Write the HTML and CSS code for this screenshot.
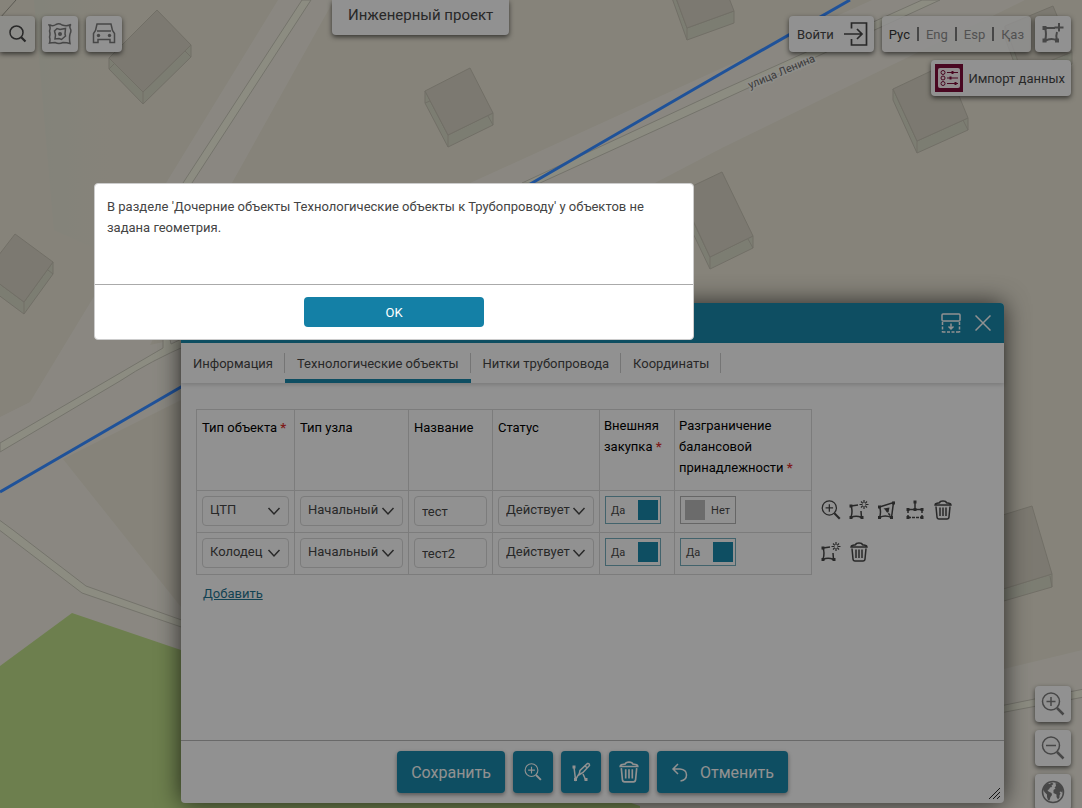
FILE: index.html
```
<!DOCTYPE html>
<html lang="ru">
<head>
  <meta charset="UTF-8" />
  <meta name="viewport" content="width=device-width, initial-scale=1.0" />
  <title>Инженерный проект</title>
  <link rel="stylesheet" href="styles.css">
</head>
<body>
  <!-- icon sprite -->
  <svg class="sprite" aria-hidden="true">
    <symbol id="i-search" viewBox="0 0 18 18"><circle cx="7.5" cy="7.5" r="6.5"/><path d="M12.2 12.2L16.5 16.5" stroke-width="2.2"/></symbol>
    <symbol id="i-layers" viewBox="0 0 24 24"><path d="M2 3Q5 4.500 8 2.500Q11 1 14 3Q19 4.500 23 2.500Q21 4 22.500 7Q23.500 9 22 12Q21 16 22 21.500Q19 20.500 15 20.500Q11 22.500 7 20.500Q4 20.500 1.500 21Q2.500 18 1.500 15Q2.500 12 1.500 9Q3 5 1 3Z"/><path d="M6.500 9L9 6.500L12 7.500L17.500 6.500L17 12L17.500 14L13.500 17.500L11 16.500L7 17L7.500 13Z"/><circle cx="12" cy="12" r="2" class="solid"/></symbol>
    <symbol id="i-car" viewBox="0 0 24 24"><path d="M3.500 8.500L5 2H19L20.500 8.500L22.500 11.500V20.500H18V17.500H6V20.500H1.500V11.500Z"/><path d="M5 9H19"/><circle cx="6.500" cy="13.500" r="1.700" class="solid"/><circle cx="17.500" cy="13.500" r="1.700" class="solid"/></symbol>
    <symbol id="i-login" viewBox="0 0 24 24"><path d="M7.500 6.500V1H22.500V23H7.500V17M0 12H18M13 7L18 12L13 17" stroke-width="1.7"/></symbol>
    <symbol id="i-addpoly" viewBox="0 0 24 24"><path d="M4 6H14M4 6Q6 12 4 19M4 19Q10 15.500 16 18.500M16 18.500Q14.500 14 16 10M18 1V9.500M13.500 5.500H22.500"/><path class="solid" d="M1.500 4h4v4h-4zM1.500 16.500h4v4h-4zM14 16.500h4v4h-4z"/></symbol>
    <symbol id="i-import" viewBox="0 0 28 28"><path class="red" d="M0 0h28v28H0z"/><rect class="pale" x="3" y="4" width="22" height="20" rx="2"/><g class="marks"><circle cx="8" cy="8.500" r="2"/><circle cx="8" cy="14" r="2"/><circle cx="8" cy="19.500" r="2"/><path d="M12 8.500H23M12 14H23M12 19.500H23"/><path d="M17.500 7v3M15.500 12.500v3M20.500 18v3" stroke-width="2"/></g></symbol>
    <symbol id="i-zoomin" viewBox="0 0 24 24"><circle cx="10" cy="9.500" r="8.500"/><path d="M5.500 9.500H14.500M10 5V14"/><path d="M16 16L22.500 22.500" stroke-width="2.500"/></symbol>
    <symbol id="i-zoomout" viewBox="0 0 24 24"><circle cx="10" cy="9.500" r="8.500"/><path d="M5 9.500H15"/><path d="M16 16L22.500 22.500" stroke-width="2.500"/></symbol>
    <symbol id="i-globe" viewBox="0 0 24 24"><circle cx="12" cy="12" r="10.500"/><path class="solid" d="M2 9L4 5L7 3.500L8.500 4L11 2.500L12.500 4L10.500 5.500L11 7L9 7.500L8 9.500L6.500 10L7.500 11.500L10.500 13L11 15L9.500 17L8.500 20.500L7 20L6 17L6 14.500L3.500 12ZM14.500 3L18 3.500L20.500 6L22 9.500L21.500 13L20 11.500L18.500 12L19.500 13.500L18.500 15.500L18.500 17.500L17 19.500L15.500 17L15.500 14.500L12.500 13L12.500 10L14.500 8.500L13.500 7.500L15 6Z"/></symbol>
    <symbol id="i-newpoly" viewBox="0 0 20 20"><path d="M2 6L9 5M2 6Q4 11 2 17.500M2 17.500Q7 15 12.500 17.500M12.500 17.500L12 11"/><path d="M15 0V3M15 6V9M10.500 4.500H13.500M16.500 4.500H19.500M12 1.500L13.800 3.300M16.200 5.700L18 7.500M18 1.500L16.200 3.300M13.800 5.700L12 7.500" stroke-width="1.200"/><path class="solid" d="M.5 4.500h3v3h-3zM.5 16h3v3h-3zM11.500 16h3v3h-3z"/></symbol>
    <symbol id="i-editpoly" viewBox="0 0 20 20"><path d="M2.500 7L16.500 2.500L14.500 17.500Q8 14.500 2.500 17.500Q4.500 12 2.500 7Z"/><path d="M9 10L13.500 16" stroke-dasharray="3 1"/><path class="solid" d="M6.500 8.500l6-1-1 5zM1 5.500h3v3h-3zM15 1.500h3v3h-3zM1 16h3v3h-3zM13 16h3v3h-3z"/></symbol>
    <symbol id="i-nodes" viewBox="0 0 20 20"><path d="M10 2V8M3 9.500H17"/><path d="M3 17.500H17" stroke-dasharray="3 1"/><path d="M3 11V17M17 11V17" stroke-dasharray="2 2"/><path class="solid" d="M8.500 0.500h3v3h-3zM8.500 8h3v3h-3zM1.500 8h3v3h-3zM15.500 8h3v3h-3zM1.500 16h3v3h-3zM15.500 16h3v3h-3z"/></symbol>
    <symbol id="i-trash" viewBox="0 0 20 20"><path d="M2 5Q2 3.500 4 3.200L6.500 2.800Q7 1 10 1Q13 1 13.500 2.800L16 3.200Q18 3.500 18 5ZM3 6.500L4 17Q4.200 19 6 19H14Q15.800 19 16 17L17 6.500M7 7.500V16M10 7.500V16M13 7.500V16"/></symbol>
    <symbol id="i-chevron" viewBox="0 0 14 10"><path d="M1.500 2L7 8L12.500 2"/></symbol>
    <symbol id="i-dock" viewBox="0 0 20 20"><rect x="1" y="1" width="18" height="7" rx="1"/><path d="M1.500 9V19.500M18.500 9V19.500M1.500 19H18.500" stroke-dasharray="3 1.500"/><path d="M10 10.500V15.500M7.500 13.500L10 16L12.500 13.500"/></symbol>
    <symbol id="i-close" viewBox="0 0 16 16"><path d="M0.500 0.500L15.500 15.500M15.500 0.500L0.500 15.500"/></symbol>
    <symbol id="i-draw" viewBox="0 0 20 20"><path d="M3 5L4.500 17.500L8 12M12 12L14.500 17.500M8 13L9 8.500L16.500 1.500Q18.500 1 18.500 3.500L12 10.500ZM14 4L16.500 6"/><path class="solid" d="M1.500 3.500h3v3h-3zM3 16h3v3h-3zM13.500 16h3v3h-3z"/></symbol>
    <symbol id="i-undo" viewBox="0 0 18 20"><path d="M7 2L2 7L7 12M2 7H9Q15.500 7.500 15.500 13Q15.500 18 9.500 19"/></symbol>
  </svg>

  <div class="app">
    <svg class="map" viewBox="0 0 1082 808" preserveAspectRatio="xMinYMin slice" aria-hidden="true">
      <defs>
        <linearGradient id="strip" x1="0" x2="1"><stop offset="0" stop-color="#dadbcb"/><stop offset="1" stop-color="#dfdacb" stop-opacity="0"/></linearGradient>
      </defs>
      <path class="land" d="M0 0H1082V808H0Z"/>
      <path fill="url(#strip)" d="M34 0H120V260L54 230Z"/>
      <path class="zone" d="M278 0H334L232 183L150 345L181 338V400L63 459L181 607V808H0V417L30 402L93 298L166 183Z"/>
      <path class="zone" d="M470 183L722 68L872 0H1025L722 148L655 183Z"/>
      <path class="zone" d="M1004 669L1082 650V808H600V760Z"/>
      <path class="green" d="M0 666L72 613L640 806V808H0Z"/>
      <path class="road" d="M302 0L183 183L120 280H130L192 183L311 0Z"/>
      <path class="road" d="M0 443L163 348V330H168L171 344L190 335V344Q150 361 120 381L0 452Z"/>
      <path class="road" d="M-2 519L13 530L86 586L190 623V630L82 593L-2 529Z"/>
      <path class="road" d="M522 183L722 90L922 0H940L722 100L540 183Z"/>
      <path class="road" d="M1000 706L1084 689V697L1000 713Z"/>
      <path class="edge" d="M16 0L0 18"/>
      <g class="house">
        <path class="wall" d="M109 58V69L143 104L191 57V45L143 92Z"/><path d="M157 10L191 45L143 92L109 58ZM143 92V104M109 69L115 63M191 57L185 51"/>
        <path class="wall" d="M425 91V103L448 147L493 125V113L448 135Z"/><path d="M470 68L493 113L448 135L425 91ZM448 135V147M425 103L430 101M493 125L488 116"/>
        <path class="wall" d="M672 -2L687 40L734 23V11L687 28L676 -2Z"/><path d="M676 -2L687 28L734 11L729 -2ZM687 28V40"/>
        <path class="wall" d="M893 89V100L917 153L968 130V118L917 141Z"/><path d="M946 64L968 118L917 141L893 89ZM917 141V153M968 130L963 120"/>
        <path class="wall" d="M1005 26V38L1022 84L1072 64V52L1022 72Z"/><path d="M1053 6L1072 52L1022 72L1005 26Z"/>
        <path class="wall" d="M680 194V206L710 269L753 248V236L710 257Z"/><path d="M722 172L753 236L710 257L680 192ZM710 257V269M753 248L748 239"/>
        <path class="wall" d="M-15 273V285L24 314L53 274V262L24 302Z"/><path d="M15 234L53 262L24 302L-15 273ZM24 302V314M53 274L48 270"/>
        <path class="wall" d="M990 593V605L1052 587V574Z"/><path d="M990 519L1032 506L1052 574L990 593ZM1052 587L1050 576"/>
      </g>
      <path class="pipe" d="M0 492L181 387L532 183L722 73L850 0"/>
      <text class="street" transform="translate(750 89) rotate(-23)">улица Ленина</text>
    </svg>

    <header class="topbar">
      <nav class="tools">
        <button class="tile tile-search" aria-label="Поиск"><svg class="icon dark" width="18" height="18"><use href="#i-search"/></svg></button>
        <button class="tile" aria-label="Слои"><svg class="icon" width="24" height="24"><use href="#i-layers"/></svg></button>
        <button class="tile" aria-label="Транспорт"><svg class="icon" width="24" height="24"><use href="#i-car"/></svg></button>
      </nav>
      <h1 class="project">Инженерный проект</h1>
      <div class="account">
        <div class="account-row">
          <button class="tile login">Войти <svg class="icon dark" width="24" height="24"><use href="#i-login"/></svg></button>
          <div class="tile langs">
            <a class="current" href="#">Рус</a><a href="#">Eng</a><a href="#">Esp</a><a href="#">Қаз</a>
          </div>
          <button class="tile add" aria-label="Добавить объект"><svg class="icon bold" width="24" height="24"><use href="#i-addpoly"/></svg></button>
        </div>
        <button class="tile import"><svg class="icon" width="28" height="28"><use href="#i-import"/></svg> Импорт данных</button>
      </div>
    </header>

    <div class="zoom">
      <button class="tile" aria-label="Приблизить"><svg class="icon" width="24" height="24"><use href="#i-zoomin"/></svg></button>
      <button class="tile" aria-label="Отдалить"><svg class="icon" width="24" height="24"><use href="#i-zoomout"/></svg></button>
      <button class="tile" aria-label="Вся карта"><svg class="icon" width="24" height="24"><use href="#i-globe"/></svg></button>
    </div>

    <section class="window">
      <div class="window-head">
        <button aria-label="Свернуть"><svg class="icon" width="20" height="20"><use href="#i-dock"/></svg></button>
        <button aria-label="Закрыть"><svg class="icon" width="16" height="16"><use href="#i-close"/></svg></button>
      </div>
      <nav class="tabs">
        <a href="#">Информация</a>
        <a class="active" href="#">Технологические объекты</a>
        <a href="#">Нитки трубопровода</a>
        <a href="#">Координаты</a>
      </nav>
      <div class="window-body">
        <table class="objects">
          <colgroup><col class="c-type"><col class="c-node"><col class="c-name"><col class="c-status"><col class="c-buy"><col class="c-balance"><col></colgroup>
          <thead>
            <tr>
              <th>Тип объекта&nbsp;<b>*</b></th>
              <th>Тип узла</th>
              <th>Название</th>
              <th>Статус</th>
              <th class="long">Внешняя закупка&nbsp;<b>*</b></th>
              <th class="long">Разграничение балансовой принадлежности&nbsp;<b>*</b></th>
              <td class="actions"></td>
            </tr>
          </thead>
          <tbody>
            <tr>
              <td><div class="select"><select aria-label="Тип объекта"><option>ЦТП</option></select><svg class="icon dark" width="14" height="10"><use href="#i-chevron"/></svg></div></td>
              <td><div class="select"><select aria-label="Тип узла"><option>Начальный</option></select><svg class="icon dark" width="14" height="10"><use href="#i-chevron"/></svg></div></td>
              <td><input class="text" type="text" value="тест" aria-label="Название"></td>
              <td><div class="select"><select aria-label="Статус"><option>Действует</option></select><svg class="icon dark" width="14" height="10"><use href="#i-chevron"/></svg></div></td>
              <td><label class="switch"><input type="checkbox" checked aria-label="Внешняя закупка"><span>Да</span></label></td>
              <td><label class="switch"><input type="checkbox" aria-label="Балансовая принадлежность"><span>Нет</span></label></td>
              <td class="actions">
                <div class="action-row">
                  <button aria-label="Показать"><svg class="icon dark" width="20" height="20"><use href="#i-zoomin"/></svg></button>
                  <button aria-label="Создать"><svg class="icon dark" width="20" height="20"><use href="#i-newpoly"/></svg></button>
                  <button aria-label="Изменить"><svg class="icon dark" width="20" height="20"><use href="#i-editpoly"/></svg></button>
                  <button aria-label="Узлы"><svg class="icon dark" width="20" height="20"><use href="#i-nodes"/></svg></button>
                  <button aria-label="Удалить"><svg class="icon dark" width="20" height="20"><use href="#i-trash"/></svg></button>
                </div>
              </td>
            </tr>
            <tr>
              <td><div class="select"><select aria-label="Тип объекта"><option>Колодец</option></select><svg class="icon dark" width="14" height="10"><use href="#i-chevron"/></svg></div></td>
              <td><div class="select"><select aria-label="Тип узла"><option>Начальный</option></select><svg class="icon dark" width="14" height="10"><use href="#i-chevron"/></svg></div></td>
              <td><input class="text" type="text" value="тест2" aria-label="Название"></td>
              <td><div class="select"><select aria-label="Статус"><option>Действует</option></select><svg class="icon dark" width="14" height="10"><use href="#i-chevron"/></svg></div></td>
              <td><label class="switch"><input type="checkbox" checked aria-label="Внешняя закупка"><span>Да</span></label></td>
              <td><label class="switch"><input type="checkbox" checked aria-label="Балансовая принадлежность"><span>Да</span></label></td>
              <td class="actions">
                <div class="action-row">
                  <button aria-label="Создать"><svg class="icon dark" width="20" height="20"><use href="#i-newpoly"/></svg></button>
                  <button aria-label="Удалить"><svg class="icon dark" width="20" height="20"><use href="#i-trash"/></svg></button>
                </div>
              </td>
            </tr>
          </tbody>
        </table>
        <a class="add-row" href="#">Добавить</a>
      </div>
      <div class="window-foot">
        <button class="btn">Сохранить</button>
        <button class="btn square" aria-label="Показать на карте"><svg class="icon" width="18" height="18"><use href="#i-zoomin"/></svg></button>
        <button class="btn square" aria-label="Рисовать"><svg class="icon" width="20" height="20"><use href="#i-draw"/></svg></button>
        <button class="btn square" aria-label="Удалить"><svg class="icon" width="22" height="22"><use href="#i-trash"/></svg></button>
        <button class="btn undo"><svg class="icon" width="18" height="20"><use href="#i-undo"/></svg> Отменить</button>
      </div>
      <svg class="grip" width="13" height="12" viewBox="0 0 13 12" aria-hidden="true"><path d="M1 11L12 0M5 11L12 4M9 11L12 8"/></svg>
    </section>

    <div class="overlay">
      <div class="modal" role="alertdialog" aria-labelledby="message">
        <p id="message">В разделе 'Дочерние объекты Технологические объекты к Трубопроводу' у объектов не задана геометрия.</p>
        <div class="modal-foot"><button class="ok">OK</button></div>
      </div>
    </div>
  </div>
</body>
</html>
```

FILE: styles.css
```
* {
  box-sizing: border-box;
}
body {
  margin: 0;
  font-family: Roboto, "Noto Sans", sans-serif;
  font-size: 13px;
  line-height: 21px;
  color: #444;
}
button, input, select {
  font: inherit;
  color: inherit;
}
button {
  padding: 0;
  border: 0;
  background: none;
  cursor: pointer;
}
a {
  color: inherit;
  text-decoration: none;
}
.sprite {
  display: none;
}
.app {
  position: relative;
  height: 100vh;
  overflow: hidden;
}

/* icons */
.icon {
  display: block;
  flex: none;
  fill: none;
  stroke: #777;
  stroke-width: 1.5;
  color: #777;
}
.icon.dark {
  stroke: #444;
  color: #444;
}
.icon.bold {
  stroke-width: 2;
}
.solid {
  fill: currentColor;
  stroke: none;
}
.red {
  fill: #7a0c38;
  stroke: none;
}
.pale {
  fill: #f2e8ec;
  stroke: none;
}
.marks {
  stroke: #7a0c38;
  stroke-width: 1;
}

/* map */
.map {
  position: absolute;
  inset: 0;
  width: 100%;
  height: 100%;
}
.land {
  fill: #dfdacb;
}
.zone {
  fill: #e6e2d7;
}
.green {
  fill: #b6d482;
}
.road {
  fill: #e9e9d7;
  stroke: #c2c0b3;
}
.edge {
  stroke: #98958a;
}
.house {
  fill: #cfcabc;
  stroke: #bdb9ab;
}
.wall {
  fill: #cfd1bf;
}
.pipe {
  fill: none;
  stroke: #3589ff;
  stroke-width: 3;
}
.street {
  font-size: 11px;
  fill: #666;
  stroke: #ecebe4;
  stroke-width: 3px;
  paint-order: stroke;
}

/* top bar */
.topbar {
  position: relative;
  display: flex;
  align-items: flex-start;
  padding-right: 11px;
}
.tools {
  display: flex;
  gap: 8px;
  width: 332px;
  padding-top: 16px;
}
.tile {
  display: flex;
  align-items: center;
  justify-content: center;
  width: 36px;
  height: 36px;
  border-radius: 4px;
  background: #f2f2f2;
  box-shadow: 0 2px 5px rgba(0, 0, 0, 0.6);
}
.tile-search {
  width: 35px;
  margin-right: -1px;
  border-radius: 0 4px 4px 0;
  background: #ebebe6;
}
.project {
  margin: 0;
  padding: 5px 16px 9px;
  border-radius: 0 0 4px 4px;
  background: #f2f2f2;
  box-shadow: 0 2px 5px rgba(0, 0, 0, 0.6);
  font-size: 15px;
  font-weight: 400;
}
.account {
  display: flex;
  flex-direction: column;
  align-items: flex-end;
  gap: 8px;
  margin-left: auto;
  padding-top: 16px;
}
.account-row {
  display: flex;
}
.login {
  width: auto;
  gap: 10px;
  margin-right: 8px;
  padding: 0 6px 0 8px;
}
.langs {
  width: auto;
  margin-right: 4px;
  padding: 0 7px;
  background: rgba(242, 242, 242, 0.8);
  color: #888;
}
.langs .current {
  color: #333;
}
.langs a + a::before {
  content: "";
  display: inline-block;
  width: 2px;
  height: 14px;
  margin: 0 7px;
  background: #777;
  vertical-align: -2px;
}
.import {
  width: auto;
  gap: 5px;
  padding: 0 6px 0 4px;
}
.zoom {
  position: absolute;
  right: 11px;
  bottom: -2px;
  display: flex;
  flex-direction: column;
  gap: 8px;
}

/* object window */
.window {
  position: absolute;
  top: 303px;
  right: 78px;
  bottom: 5px;
  left: 181px;
  display: flex;
  flex-direction: column;
  border-radius: 4px;
  background: #f2f2f2;
  box-shadow: 0 0 24px rgba(0, 0, 0, 0.7);
}
.window-head {
  display: flex;
  align-items: center;
  justify-content: flex-end;
  gap: 14px;
  height: 40px;
  padding-right: 13px;
  border-radius: 4px 4px 0 0;
  background: #1883a3;
}
.window-head .icon {
  stroke: #f2f2f2;
}
.tabs {
  display: flex;
  height: 40px;
  box-shadow: 0 2px 4px rgba(0, 0, 0, 0.15);
}
.tabs a {
  display: flex;
  align-items: center;
  padding: 4px 12px 0;
  border-bottom: 4px solid transparent;
  background: linear-gradient(#c4c4c4, #c4c4c4) right 10px / 1px 20px no-repeat;
}
.tabs .active {
  border-color: #1883a3;
}
.window-body {
  flex: 1;
  padding: 26px 15px;
}
.objects {
  width: 100%;
  table-layout: fixed;
  border-collapse: collapse;
}
.c-type {
  width: 98px;
}
.c-node {
  width: 114px;
}
.c-name {
  width: 84px;
}
.c-status {
  width: 107px;
}
.c-buy {
  width: 75px;
}
.c-balance {
  width: 137px;
}
.objects th {
  height: 81px;
  padding: 7px 4px 7px 5px;
  border: 1px solid #cfcfcf;
  color: #000;
  font-weight: 400;
  text-align: left;
  vertical-align: top;
}
.objects th.long {
  padding: 5px 4px;
}
.objects th b {
  color: #d32f2f;
}
.objects td {
  height: 42px;
  padding: 5px;
  border: 1px solid #cfcfcf;
  vertical-align: top;
}
.objects td.actions {
  padding: 9px 0 0 9px;
  border: 0;
}
.action-row {
  display: flex;
  gap: 8px;
}
.select {
  position: relative;
}
.select select {
  display: block;
  width: 100%;
  height: 30px;
  padding: 0 20px 3px 7px;
  border: 1px solid #cfcfcf;
  border-radius: 4px;
  background: transparent;
  appearance: none;
}
.select .icon {
  position: absolute;
  top: 10px;
  right: 8px;
  pointer-events: none;
}
.text {
  display: block;
  width: 100%;
  height: 30px;
  padding: 0 7px;
  border: 1px solid #cfcfcf;
  border-radius: 4px;
  background: transparent;
}
.switch {
  display: flex;
  align-items: center;
  justify-content: space-between;
  width: 56px;
  height: 28px;
  padding: 0 5px 0 4px;
  border: 1px solid #aaa;
  font-size: 11px;
}
.switch:has(:checked) {
  flex-direction: row-reverse;
  padding: 0 2px 0 5px;
  border-color: #6fa5b5;
}
.switch input {
  width: 20px;
  height: 20px;
  margin: 0;
  appearance: none;
  background: #b3b3b3;
}
.switch input:checked {
  background: #1883a3;
}
.add-row {
  display: inline-block;
  margin: 8px 7px;
  color: #1f6f8a;
  text-decoration: underline;
}
.window-foot {
  display: flex;
  justify-content: center;
  gap: 8px;
  padding: 10px;
  border-top: 1px solid #b0b0b0;
}
.btn {
  display: flex;
  align-items: center;
  justify-content: center;
  gap: 11px;
  height: 42px;
  padding: 0 14px;
  border-radius: 4px;
  background: #1883a3;
  box-shadow: 0 2px 4px rgba(0, 0, 0, 0.4);
  color: #f2f2f2;
  font-size: 16px;
}
.btn .icon {
  stroke: #f2f2f2;
  color: #f2f2f2;
}
.square {
  width: 40px;
  padding: 0;
}
.grip {
  position: absolute;
  right: 3px;
  bottom: 3px;
  fill: none;
  stroke: #222;
}

/* message */
.overlay {
  position: absolute;
  inset: 0;
  background: rgba(0, 0, 0, 0.4);
}
.modal {
  position: absolute;
  top: 183px;
  left: 94px;
  width: 600px;
  max-width: calc(100% - 94px);
  border: 1px solid #ccc;
  border-radius: 4px;
  background: #fff;
}
.modal p {
  min-height: 100px;
  margin: 0;
  padding: 12px;
}
.modal-foot {
  display: flex;
  justify-content: center;
  padding: 12px;
  border-top: 1px solid #aaa;
}
.ok {
  width: 180px;
  height: 30px;
  border-radius: 4px;
  background: #1480a6;
  color: #fff;
}
```
